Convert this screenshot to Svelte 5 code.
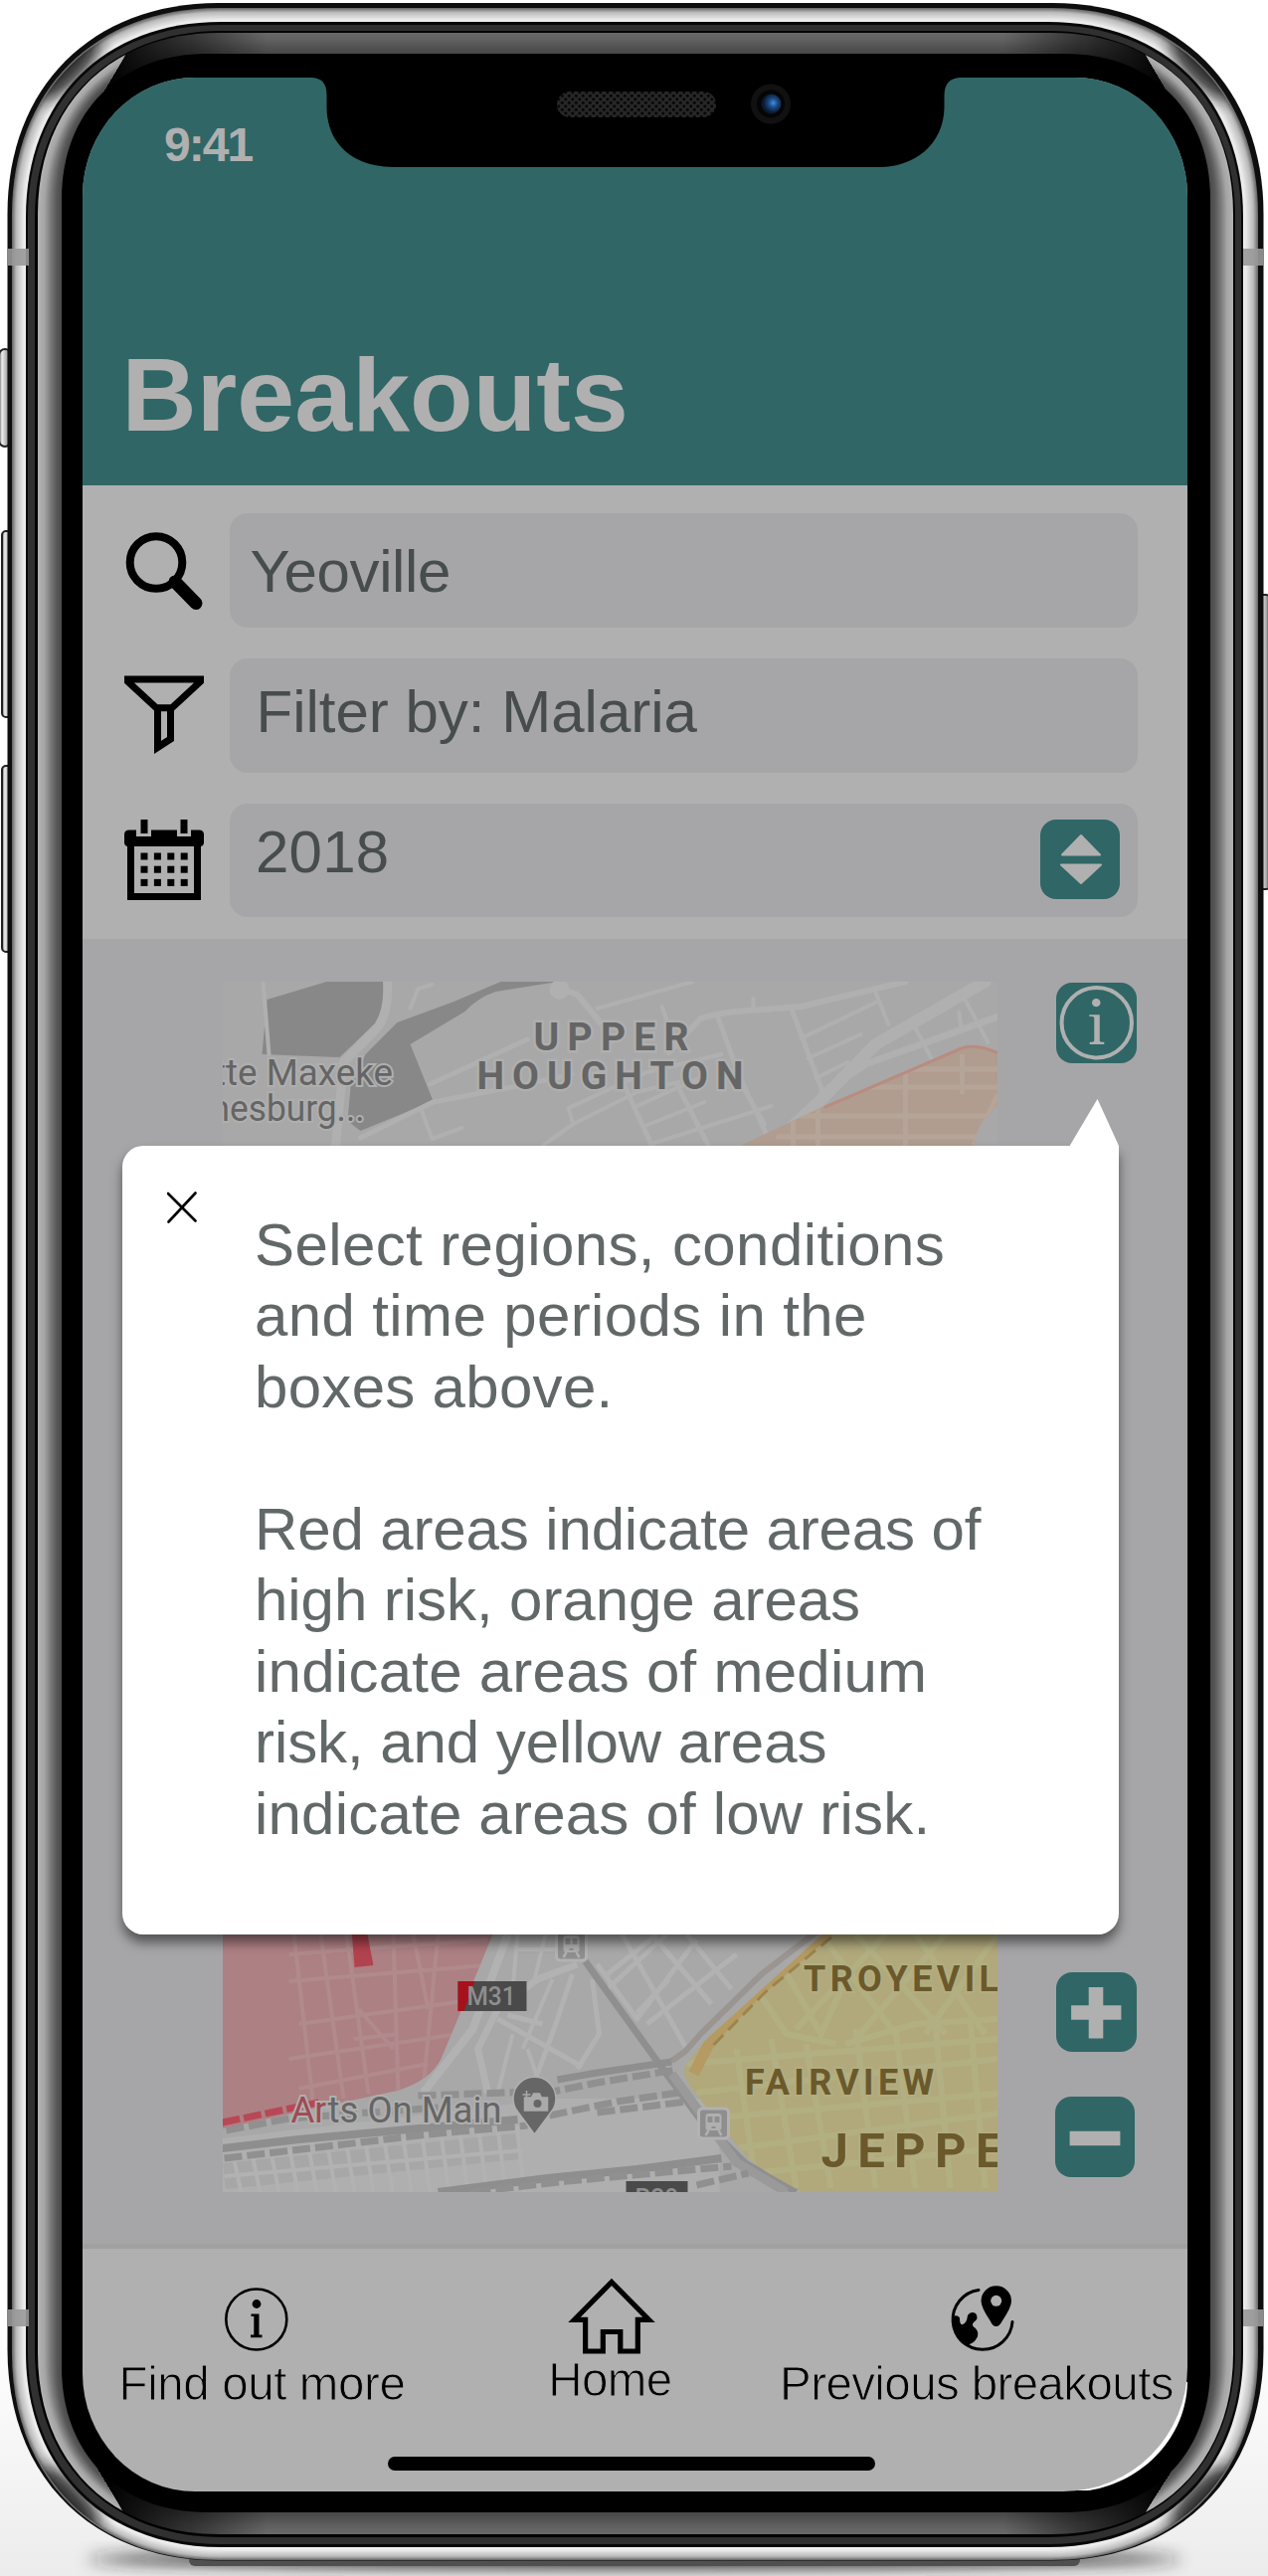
<script>
  // Rounded outline with a slightly squared, continuous corner
  function shell([l, t, r, b, R], k = 0.6) {
    const c = R * (1 - k);
    return `M${l + R} ${t}H${r - R}C${r - c} ${t} ${r} ${t + c} ${r} ${t + R}V${b - R}C${r} ${b - c} ${r - c} ${b} ${r - R} ${b}H${l + R}C${l + c} ${b} ${l} ${b - c} ${l} ${b - R}V${t + R}C${l} ${t + c} ${l + c} ${t} ${l + R} ${t}Z`;
  }
  function bands(from, to, shades, n) {
    return Array.from({ length: n }, (_, i) => {
      const f = i / n;
      const box = from.map((v, j) => v + (to[j] - v) * f);
      const p = f * (shades.length - 1);
      const a = Math.floor(p);
      const g = Math.round(shades[a] + (shades[Math.min(a + 1, shades.length - 1)] - shades[a]) * (p - a));
      return { d: shell(box), fill: `rgb(${g},${g},${g})` };
    });
  }
  const steel = bands([12, 8, 1265, 2574, 208], [27, 23, 1249, 2561, 196], [110, 185, 210, 235, 242], 14);
  const bezelOuter = [38, 33, 1240, 2548, 182];
  const bezelInner = [62, 54, 1217, 2526, 146];
  const sideGlow = bands(bezelOuter, bezelInner, [178, 165, 125, 90, 72], 20);
  const capGlow = bands(bezelOuter, bezelInner, [104, 96, 82, 70], 14);

  const lines = [
    ['Select regions, conditions', 0.4], ['and time periods in the', 0.38], ['boxes above.', 0.3], ['\u00a0', 0],
    ['Red areas indicate areas of', -0.13], ['high risk, orange areas', -0.06], ['indicate areas of medium', 0.25],
    ['risk, and yellow areas', -0.07], ['indicate areas of low risk.', 0.21]
  ];
  const dots = [0, 1, 2].flatMap((y) => [0, 1, 2, 3].map((x) => [16.5 + x * 13.4, 33.5 + y * 13.2]));

  const northRoads = [
    [9, 'M389 987 Q391 1015 380 1032 L345 1068 L337 1152'],
    [4, 'M264 987 L270 1060'],
    [4, 'M412 1014 L420 994 L434 990'],
    [6, 'M560 993 L580 1000 L603 1028 M672 1058 L704 1024 Q715 1020 740 1017 L805 1012 L910 987'],
    [4, 'M600 1014 L696 987'],
    [4, 'M665 1012 L675 1040 M757 1004 V1015'],
    [5, 'M722 1024 L742 1080 L770 1140'],
    [5, 'M796 1016 L826 1096'],
    [12, 'M990 987 L880 1050 L826 1105 L775 1152'],
    [7, 'M826 1100 L870 1070 L1003 1022'],
    [4, 'M805 1044 L880 1008 M812 1064 L865 1040 M820 1084 L852 1068'],
    [4, 'M880 998 L893 1030 M918 1030 L938 1068 M967 1000 L993 1048 M964 1018 L966 1035'],
    [5, 'M432 1090 L530 1045 M362 1144 L435 1108 L520 1092 L575 1080'],
    [4, 'M424 1118 L434 1145 L464 1134'],
    [4, 'M545 1152 L576 1130 L571 1114 L650 1078 L725 1060'],
    [4, 'M576 1130 L640 1098 L682 1088'],
    [5, 'M622 1080 L655 1152 M680 1090 L712 1152 M745 1090 L768 1130'],
    [4, 'M640 1112 L700 1085 M648 1132 L708 1108 M655 1150 L775 1112']
  ];
  const southRoads = [
    [8, 'M510 1945 L475 2040 L425 2104'],
    [7, 'M580 1975 L540 1990 L500 2020 L480 2060 L490 2104'],
    [4, 'M520 1960 L590 1960 M520 1945 L515 2000 M548 1945 L537 1990'],
    [5, 'M575 1985 L560 2030 L540 2085 M595 1990 L602 2045 L580 2080'],
    [5, 'M500 2030 L585 2078 M510 2026 L545 2035'],
    [5, 'M600 1975 L640 2030 L700 1950 M625 1945 L690 2060 M655 1945 L715 2015 M690 1945 L735 2000'],
    [5, 'M610 2000 L670 1945 M640 2024 L672 1990 M650 2035 L740 1965 M660 1945 L610 1985'],
    [4, 'M530 2060 L545 2104 M515 2045 L500 2104 M555 1990 L525 2060']
  ];
  const blocks = Array.from({ length: 16 }, (_, i) => `M${234 + i * 19} ${2168 - i * 2} L${242 + i * 19} 2204`);
</script>

<main class="stage">
  <svg class="device" viewBox="0 0 1275 2590" width="1275" height="2590" aria-hidden="true">
    <defs>
      <linearGradient id="floor" x1="0" y1="0" x2="0" y2="1">
        <stop offset="0" stop-color="#fff" /><stop offset="1" stop-color="#ececec" />
      </linearGradient>
      <linearGradient id="key" x1="0" x2="1">
        <stop offset="0" stop-color="#555" /><stop offset=".25" stop-color="#eee" />
        <stop offset=".65" stop-color="#aaa" /><stop offset="1" stop-color="#444" />
      </linearGradient>
      <linearGradient id="edges" gradientUnits="userSpaceOnUse" x1="110" x2="1168" y1="0" y2="0">
        <stop offset="0" stop-color="#000" /><stop offset=".15" stop-color="#fff" />
        <stop offset=".85" stop-color="#fff" /><stop offset="1" stop-color="#000" />
      </linearGradient>
      <mask id="capMask" maskUnits="userSpaceOnUse" x="0" y="0" width="1275" height="2590">
        <rect x="110" width="1058" height="2590" fill="url(#edges)" />
      </mask>
      <clipPath id="sides">
        <path d="M0 20H130L128 52 90 115V2470L124 2526 128 2570H0ZM1275 20H1148L1150 52 1188 115V2470L1152 2526 1148 2570H1275Z" />
      </clipPath>
      <clipPath id="steelClip"><path d={shell([13, 9, 1264, 2573, 208])} /></clipPath>
      <filter id="soft" x="-20%" y="-50%" width="140%" height="200%"><feGaussianBlur stdDeviation="8" /></filter>
      <pattern id="mesh" width="7" height="7" patternUnits="userSpaceOnUse">
        <rect width="7" height="7" fill="#272727" />
        <circle cx="1.8" cy="1.8" r="1.6" fill="#080808" /><circle cx="5.3" cy="5.3" r="1.6" fill="#080808" />
      </pattern>
      <radialGradient id="lens" cx=".6" cy=".45"><stop offset="0" stop-color="#3d8fe0" /><stop offset=".45" stop-color="#1d4a86" /><stop offset="1" stop-color="#0b1830" /></radialGradient>
    </defs>
    <rect y="2340" width="1275" height="250" fill="url(#floor)" />
    <ellipse cx="638" cy="2573" rx="550" ry="9" fill="#222" filter="url(#soft)" />
    <rect x="190" y="2568" width="896" height="12" rx="6" fill="#505050" />
    <g fill="url(#key)" stroke="#222" stroke-width="2">
      <rect x="-1" y="351" width="12" height="98" rx="6" />
      <rect x="2" y="534" width="11" height="187" rx="4" />
      <rect x="2" y="770" width="11" height="187" rx="4" />
      <rect x="1266" y="598" width="11" height="296" rx="4" />
    </g>
    <path d={shell([7.5, 3, 1270.5, 2574.5, 212])} fill="#0e0e0e" />
    {#each steel as band}<path d={band.d} fill={band.fill} />{/each}
    <g clip-path="url(#steelClip)" fill="#1a1a1a" filter="url(#soft)" opacity=".85">
      <ellipse cx="68" cy="68" rx="42" ry="17" transform="rotate(-45 68 68)" />
      <ellipse cx="1209" cy="68" rx="42" ry="17" transform="rotate(45 1209 68)" />
      <ellipse cx="68" cy="2512" rx="42" ry="17" transform="rotate(45 68 2512)" />
      <ellipse cx="1209" cy="2512" rx="42" ry="17" transform="rotate(-45 1209 2512)" />
    </g>
    <path d={shell([26, 22, 1250, 2561, 196])} fill="#080808" />
    <path d={shell([28, 25, 1248, 2558, 194])} fill="#303030" />
    <path d={shell([35, 31, 1242, 2551, 188])} fill="#020202" />
    <g mask="url(#capMask)">{#each capGlow as band}<path d={band.d} fill={band.fill} />{/each}</g>
    <g clip-path="url(#sides)">{#each sideGlow as band}<path d={band.d} fill={band.fill} />{/each}</g>
    <path d={shell(bezelInner)} />
    <g fill="#999" opacity=".9">
      <rect x="8" y="250" width="21" height="17" /><rect x="1250" y="250" width="20" height="17" />
      <rect x="8" y="2322" width="21" height="17" /><rect x="1250" y="2322" width="20" height="17" />
    </g>
    <path d="M1194 2395C1193 2450 1150 2495 1095 2504L1060 2504 1150 2380Z" fill="#fff" />
  </svg>

  <div class="screen">
    <header class="hero">
      <div class="clock">9:41</div>
      <h1>Breakouts</h1>
    </header>

    <section class="filters">
      <div class="row">
        <svg class="glyph" viewBox="0 0 80 82"><circle cx="32" cy="33.5" r="26.3" fill="none" stroke="#000" stroke-width="8" /><path d="M51 54.5L72 76" stroke="#000" stroke-width="13" stroke-linecap="round" transform="translate(0 -1.5)" /></svg>
        <div class="field search">Yeoville</div>
      </div>
      <div class="row">
        <svg class="glyph" viewBox="0 0 80 82"><path d="M3.5 5V7.2L33.500 35V73.500L46.500 65V35L76.500 7.200V5Z M31 33.800H49" fill="none" stroke="#000" stroke-width="7" /></svg>
        <div class="field condition">Filter by: Malaria</div>
      </div>
      <div class="row">
        <svg class="glyph" viewBox="0 1 80 82">
          <path d="M5 11.500H12V18H27V11.500H53V18H67V11.500H75Q80 11.500 80 16V24Q80 27 77 28V82H3V28Q0 27 0 24V16Q0 11.500 5 11.500ZM10 28V75H70V28Z" fill-rule="evenodd" />
          <path d="M16.500 1h7v14h-7zM56.500 1h7v14h-7z" />
          {#each dots as [x, y]}<rect {x} {y} width="7" height="7" transform="translate(0 1)" />{/each}
        </svg>
        <div class="field year">
          <span>2018</span>
          <svg class="stepper" viewBox="0 0 80 80"><path d="M22 35.500L41 16 60 35.500ZM21 45.500L41 64 61 45.500Z" fill="#b0b0b0" stroke="#b0b0b0" stroke-width="2" stroke-linejoin="round" /></svg>
        </div>
      </div>
    </section>

    <section class="explorer">
      <svg class="map" viewBox="223.5 987 779 1217" preserveAspectRatio="none">
        <defs>
          <clipPath id="redZone"><path d="M223 1930H499L495 1945 461 2027 443 2070Q432 2092 399 2102L223 2140Z" /></clipPath>
          <clipPath id="yellowZone"><path d="M843 1930H1003V2204H807Q760 2180 749 2167L697 2103Q682 2083 690 2075L707 2053Z" /></clipPath>
          <clipPath id="orangeZone"><path d="M744 1152L828 1112 965 1053Q979 1047 1003 1057V1110L984 1133 979 1152Z" /></clipPath>
        </defs>
        <rect x="223" y="987" width="780" height="1217" fill="#a8a8a8" />
        <g fill="#888">
          <path d="M268 1005L328 987H389L383 1023 341 1063 263 1060Z" />
          <path d="M503 987H561L498 997Q480 1003 467 1017L412 1050 435 1107 362 1137 349 1127 352 1093 367 1060 399 1028 456 1007Z" />
        </g>
        <g fill="none" stroke="#b0b0b0" stroke-linecap="round" stroke-linejoin="round">
          {#each northRoads as [w, d]}<path {d} stroke-width={w} />{/each}
        </g>
        <circle cx="562" cy="995" r="10" fill="#b0b0b0" />
        <g clip-path="url(#orangeZone)">
          <rect x="730" y="1040" width="280" height="120" fill="#b19c90" />
          <path d="M790 1122H1003M780 1143H1003M870 1093H1003M905 1075H1003M797 1120V1152M822 1110V1152M910 1070V1152M967 1060V1100M1003 1100L978 1152" fill="none" stroke="#b5a598" stroke-width="5" />
          <path d="M828 1112L965 1053Q979 1047 1003 1057" fill="none" stroke="#b88c7f" stroke-width="6" />
        </g>
        <path d="M223 2150L560 2110H723V2204H223Z" fill="#afafaf" />
        <g fill="none" stroke="#b2b2b2" stroke-linejoin="round">
          {#each southRoads as [w, d]}<path {d} stroke-width={w} />{/each}
        </g>
        <path d="M225 2188L520 2158" fill="none" stroke="#a7a7a7" stroke-width="26" />
        <g fill="none" stroke="#b2b2b2" stroke-width="4">
          {#each blocks as d}<path {d} />{/each}
          <path d="M225 2188L525 2162" />
        </g>
        <path d="M588 1972L668 2083L703 2130 749 2175 800 2204" fill="none" stroke="#8f8f8f" stroke-width="7" />
        <path d="M675 2085L740 2174 790 2204" fill="none" stroke="#9a9a9a" stroke-width="9" />
        <path d="M675 2072L688 2063 705 2044 765 1985 830 1935" fill="none" stroke="#9b9591" stroke-width="6" />
        <g fill="none" stroke="#8e8e8e">
          <path d="M560 2091L600 2084 675 2073" stroke-width="7" />
          <path d="M223 2160L300 2151 410 2141 520 2131" stroke-width="8" />
          <path d="M440 2204L550 2190 640 2181 725 2170" stroke-width="8" />
        </g>
        <g fill="none" stroke="#909090" stroke-width="7" stroke-dasharray="18 5">
          <path d="M545 2105L600 2094 680 2081" /><path d="M552 2127L620 2113 682 2104" />
          <path d="M600 2124L690 2113" /><path d="M420 2107L540 2103" />
          <path d="M225 2170L320 2159 430 2146 530 2137" /><path d="M227 2142L290 2130 440 2119" />
          <path d="M475 2204L570 2193 735 2178" /><path d="M700 2197L752 2185" />
        </g>

        <g clip-path="url(#redZone)">
          <rect x="223" y="1930" width="280" height="215" fill="#ad8084" />
          <g fill="none" stroke="#b18a8d" stroke-width="4">
            <path d="M290 1992L500 1975M290 1965L490 1950M300 2035L480 2010M290 2070L460 2045M300 2100L430 2075M360 2020L395 2060M355 2050L400 2045" />
            <path d="M295 1945L315 2120M322 1945L345 2110M348 1945L370 2105M395 1945L400 2105M440 1945L425 2100M415 1945L430 2020" />
          </g>
          <path d="M223 2134L320 2114" stroke="#b84855" stroke-width="7" stroke-dasharray="18 4" />
          <path d="M353 1940H368L375 1976 356 1978Z" fill="#b1434e" />
        </g>
        <g clip-path="url(#yellowZone)">
          <rect x="680" y="1930" width="330" height="280" fill="#b1a97b" />
          <g fill="none" stroke="#b2b083" stroke-width="6">
            <path d="M690 2075L1003 2050M700 2104L1003 2070M710 2130L1003 2105M740 2160L1003 2125M755 2185L1003 2160M850 2055L920 2035 1003 2030" />
            <path d="M760 2000L790 2045 840 2055M785 1975L825 2045 850 1990 M825 1945L900 2045M860 1945L950 2045M920 1945L990 2045M1003 1945L930 2045M950 1945L860 2050M890 1945L800 2040" />
            <path d="M740 2060L760 2200M775 2050L800 2200M810 2055L835 2200M860 2040L880 2200M900 2040L920 2200M940 2035L955 2200M975 2030L990 2200" />
          </g>
          <path d="M697 2085L715 2050 760 2004 836 1938" fill="none" stroke="#b59a61" stroke-width="11" />
          <path d="M712 2052L765 1998 835 1940" fill="none" stroke="#9a854f" stroke-width="3" stroke-dasharray="14 7" transform="translate(5 4)" />
        </g>

        <g class="area">
          <text x="536" y="1055.500" textLength="156" lengthAdjust="spacing">UPPER</text>
          <text x="479" y="1094.500" textLength="268">HOUGHTON</text>
        </g>
        <g class="place">
          <text x="214.500" y="1090.500" textLength="180" lengthAdjust="spacingAndGlyphs">tte Maxeke</text>
          <text x="211" y="1127" textLength="155" lengthAdjust="spacingAndGlyphs">nesburg...</text>
          <text x="292" y="2133.500" textLength="212" lengthAdjust="spacingAndGlyphs"><tspan fill="#a04a52">Ar</tspan>ts On Main</text>
        </g>
        <g class="suburb">
          <text x="807.500" y="2001.500" textLength="196">TROYEVIL</text>
          <text x="748.500" y="2106" textLength="190">FAIRVIEW</text>
          <text class="big" x="825" y="2178.500" textLength="183">JEPPE</text>
        </g>
        <g class="shield">
          <rect x="460" y="1992" width="69" height="30" /><path d="M460 1992H477L466 2022H460Z" fill="#a8101c" />
          <text x="469" y="2016" textLength="49" lengthAdjust="spacingAndGlyphs">M31</text>
          <rect x="629" y="2193" width="62" height="30" />
          <text x="638" y="2218.500" textLength="44" lengthAdjust="spacingAndGlyphs">R29</text>
        </g>
        <path d="M537 2146L520 2123A21.500 21.500 0 1 1 554 2123Z" fill="#666" stroke="#b0b0b0" stroke-width="1.500" />
        <path d="M527 2109H534L536 2105H542L544 2109H550V2122H527ZM529 2102V2110M525 2106H533" fill="#aaa" stroke="#aaa" stroke-width="1.500" /><circle cx="540" cy="2115" r="4" fill="#666" />
        {#each [[559, 1941], [702, 2120]] as [x, y]}
          <g transform="translate({x} {y})">
            <rect width="30" height="30" rx="4" fill="#8e8e8e" stroke="#b2b2b2" stroke-width="3" />
            <rect x="7" y="5" width="16" height="17" rx="3" fill="#b0b0b0" /><path d="M9 8h5v6H9zM16 8h5v6h-5zM13 18h4v2h-4z" fill="#8e8e8e" /><path d="M10 22L7 27M20 22L23 27" stroke="#b0b0b0" stroke-width="2.500" />
          </g>
        {/each}
      </svg>
      <div class="controls">
        <svg class="tool" viewBox="0 0 80 80">
          <ellipse cx="40.500" cy="40" rx="35" ry="35" fill="none" stroke="#b0b0b0" stroke-width="4" />
          <circle cx="40" cy="20" r="4.200" fill="#b0b0b0" /><path d="M33 32H43.500V58Q43.500 59.500 48 59.500V61.500H33.500V59.500Q38 59.500 38 58V35Q38 33.500 33 33.500Z" fill="#b0b0b0" />
        </svg>
        <div class="zoom">
          <svg class="tool" viewBox="0 0 80 80"><path d="M32.500 15H47V33H65V47.500H47V66H32.500V47.500H15V33H32.500Z" fill="#b0b0b0" /></svg>
          <svg class="tool minus" viewBox="0 0 80 80"><path d="M14.500 34.500H65V49H14.500Z" fill="#b0b0b0" /></svg>
        </div>
      </div>
    </section>

    <nav class="tabs">
      <a class="tab more">
        <svg viewBox="214 2285 100 90"><circle cx="257.800" cy="2332" r="30.500" fill="none" stroke="#000" stroke-width="2.600" /><circle cx="258" cy="2316.500" r="4.400" /><path d="M252.500 2326.500H260.500V2347.500H263.500V2350.300H252V2347.500H255.300V2329H252.500Z" /></svg>
        <span>Find out more</span>
      </a>
      <a class="tab home">
        <svg viewBox="564 2285 100 90"><path d="M615 2294.500L652.500 2332.300H641.300V2364H623.800V2344.500H606.300V2364H588.600V2332.300H577.500Z" fill="none" stroke="#000" stroke-width="5.200" /></svg>
        <span>Home</span>
      </a>
      <a class="tab">
        <svg viewBox="932 2285 100 90">
          <path d="M984 2302.500A30 30 0 1 0 1018 2334.500" fill="none" stroke="#000" stroke-width="3" stroke-linecap="round" />
          <path d="M957 2329Q964 2327 965 2331Q965 2338 968 2337Q972 2336 973 2328Q976 2323 981 2326Q985 2331 979 2335Q976 2338 981 2341Q985 2346 982 2351Q979 2357 970 2358Q957 2350 957 2329Z" />
          <path d="M1001.700 2339Q998 2339 996 2334Q986.500 2320 986.500 2313.500A15.200 15.200 0 0 1 1017 2313.500Q1017 2320 1007.500 2334Q1005 2339 1001.700 2339Z" /><circle cx="1001.700" cy="2313.300" r="5.500" fill="#b0b0b0" />
        </svg>
        <span>Previous breakouts</span>
      </a>
    </nav>
    <div class="indicator"></div>

    <div class="popup">
      <svg class="tail" viewBox="0 0 50 48"><path d="M28.500 0L50 47V48H0Z" fill="#fff" /></svg>
      <svg class="close" viewBox="0 0 30 30"><path d="M1 1L28.500 28.500M28.500 .5L1.500 29.500" stroke="#000" stroke-width="2.600" stroke-linecap="round" /></svg>
      <div class="copy">{#each lines as [line, tracking]}<div style="letter-spacing: {tracking}px">{line}</div>{/each}</div>
    </div>
  </div>

  <svg class="notch" viewBox="314 76 651 93" aria-hidden="true">
    <path d="M314 76V78Q328.500 79 328.500 95V108C329 145 355 168 396 168H884C920 168 949 145 949.500 108V95Q950 79 965 78V76Z" />
    <rect x="560" y="92" width="160" height="26" rx="13" fill="url(#mesh)" />
    <circle cx="775" cy="104.500" r="20" fill="#111" /><circle cx="775" cy="104.500" r="14" fill="#050505" /><circle cx="775.500" cy="104.500" r="10" fill="url(#lens)" />
  </svg>
</main>

<style>
  :global(body) { margin: 0; background: #fff; }
  .stage { position: relative; width: 1275px; height: 2590px; overflow: hidden; box-sizing: border-box; padding: 78px 81px 0 83px; font-family: 'Liberation Sans', Arial, sans-serif; }
  .device { position: absolute; inset: 0; }
  .notch { position: absolute; left: 314px; top: 76px; width: 651px; height: 93px; }
  .screen { position: relative; width: 1111px; height: 2427px; border-radius: 113px 113px 125px 113px / 119px 119px 125px 119px; overflow: hidden; background: #b0b0b0; display: flex; flex-direction: column; }
  .hero { height: 410px; flex: none; background: #306666; color: #b0b0b0; box-sizing: border-box; padding: 41px 0 0 82px; }
  .clock { font-size: 48px; line-height: 54px; font-weight: 700; letter-spacing: -2px; }
  h1 { margin: 164px 0 0 -42.5px; font-size: 104px; line-height: 120px; font-weight: 700; letter-spacing: .1px; }
  .filters { flex: none; height: 455.5px; box-sizing: border-box; padding: 28px 50.5px 0 42px; display: flex; flex-direction: column; gap: 31.2px; }
  .row { display: flex; align-items: center; height: 114.7px; gap: 25.5px; }
  .glyph { width: 80px; height: 82px; flex: none; }
  .field { flex: 1; height: 100%; box-sizing: border-box; border-radius: 18px; background: #a6a6a8; color: #474c4c; font-size: 60px; display: flex; align-items: center; }
  .search { padding: 3px 0 0 21px; letter-spacing: -.4px; }
  .condition { padding: 0 0 7px 27px; letter-spacing: 0; }
  .year { padding: 0 18px 0 26.5px; justify-content: space-between; letter-spacing: .2px; }
  .year span { padding-bottom: 18px; }
  .stepper { width: 80px; height: 80px; margin-bottom: 2px; border-radius: 16px; background: #306666; }
  .explorer { flex: none; height: 1312.5px; box-sizing: border-box; padding: 43.5px 51px 51.5px 140.5px; background: #a6a6a8; display: flex; justify-content: space-between; }
  .map { width: 779px; height: 1217px; }
  .controls { width: 81px; display: flex; flex-direction: column; justify-content: space-between; padding-top: 1px; padding-bottom: 16px; box-sizing: border-box; }
  .tool { display: block; width: 80.5px; height: 80.5px; border-radius: 16px; background: #306666; }
  .zoom { display: flex; flex-direction: column; gap: 45px; }
  .minus { margin-left: -1.5px; }
  .area, .suburb, .place, .shield { font-family: Roboto, sans-serif; }
  .area { font-size: 39px; font-weight: 700; fill: #656565; stroke: #afafaf; stroke-width: 5px; paint-order: stroke; }
  .place { font-size: 36px; font-weight: 400; fill: #656565; stroke: #afafaf; stroke-width: 4px; paint-order: stroke; }
  .suburb { font-size: 36px; font-weight: 700; fill: #6b592b; stroke: #b1ae82; stroke-width: 4px; paint-order: stroke; }
  .suburb .big { font-size: 49px; }
  .shield { font-size: 25px; font-weight: 500; fill: #4a4a4a; }
  .shield text { fill: #8e8e8e; }
  .tabs { flex: none; border-top: 5px solid #a0a0a0; padding-top: 24px; display: grid; grid-template-columns: 362px 337px 400px; }
  .tab { display: flex; flex-direction: column; align-items: center; color: #000; }
  .tab svg { width: 100px; height: 90px; display: block; }
  .tab span { margin-top: -6px; font-size: 47.5px; line-height: 56px; white-space: nowrap; letter-spacing: -.6px; -webkit-text-stroke: 1px #b0b0b0; }
  .more span { letter-spacing: -.4px; margin-left: -1px; }
  .home span { margin-top: -10px; }
  .indicator { position: absolute; left: 306.5px; bottom: 21.5px; width: 490.5px; height: 14px; border-radius: 7px; background: #000; }
  .popup { position: absolute; left: 40px; top: 1074px; width: 1002px; height: 792.5px; box-sizing: border-box; padding: 63.5px 0 0 133px; border-radius: 21px 0 21px 21px; background: #fff; box-shadow: 0 8px 12px rgba(0, 0, 0, .5); }
  .tail { position: absolute; right: 0; top: -47px; width: 50px; height: 48px; }
  .close { position: absolute; left: 45px; top: 46px; width: 30px; height: 32px; }
  .copy { font-size: 60px; line-height: 71.5px; color: #626868; white-space: nowrap; }
</style>
